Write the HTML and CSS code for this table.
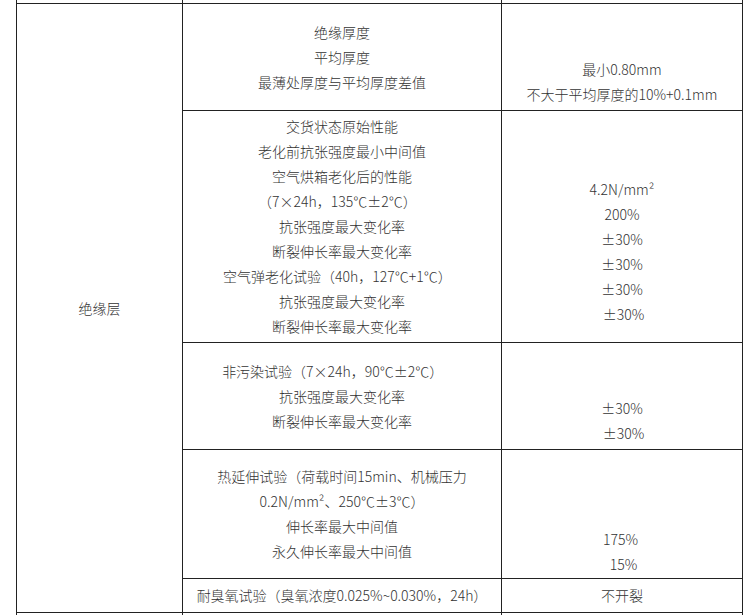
FILE: index.html
```html
<!DOCTYPE html>
<html lang="zh-CN">
<head>
<meta charset="utf-8">
<title>绝缘层性能要求</title>
<link rel="stylesheet" href="styles.css">
</head>
<body>
<div class="page">
  <div class="spec">
    <div class="cell c1 top"></div>
    <div class="cell c2 top"></div>
    <div class="cell c3 top"></div>

    <div class="cell c1 layer"><p>绝缘层</p></div>

    <div class="cell c2 r1"><p>绝缘厚度<br>平均厚度<br>最薄处厚度与平均厚度差值</p></div>
    <div class="cell c3 r1"><p><br><br>最小0.80mm<br>不大于平均厚度的10%+0.1mm</p></div>

    <div class="cell c2 r2"><p>交货状态原始性能<br>老化前抗张强度最小中间值<br>空气烘箱老化后的性能<br>（7×24h，135℃±2℃）&nbsp;&nbsp;&nbsp;<br>抗张强度最大变化率<br>断裂伸长率最大变化率<br>空气弹老化试验（40h，127℃+1℃）&nbsp;&nbsp;&nbsp;<br>抗张强度最大变化率<br>断裂伸长率最大变化率</p></div>
    <div class="cell c3 r2"><p><br><br>4.2N/mm²<br>200%<br>±30%<br>±30%<br>±30%<br>&nbsp;±30%</p></div>

    <div class="cell c2 r3"><p>非污染试验（7×24h，90℃±2℃）&nbsp;&nbsp;&nbsp;&nbsp;&nbsp;&nbsp;<br>抗张强度最大变化率<br>断裂伸长率最大变化率</p></div>
    <div class="cell c3 r3"><p><br><br>±30%<br>&nbsp;±30%</p></div>

    <div class="cell c2 r4"><p>热延伸试验（荷载时间15min、机械压力<br>0.2N/mm²、250℃±3℃）<br>伸长率最大中间值<br>永久伸长率最大中间值</p></div>
    <div class="cell c3 r4"><p><br><br><br>175%&nbsp;<br>&nbsp;15%</p></div>

    <div class="cell c2 r5"><p>耐臭氧试验（臭氧浓度0.025%~0.030%，24h）</p></div>
    <div class="cell c3 r5"><p>不开裂</p></div>

    <div class="cell c1 bottom"></div>
    <div class="cell c2 bottom"></div>
    <div class="cell c3 bottom"></div>
  </div>
</div>
</body>
</html>
```

FILE: styles.css
```css
html, body {
  margin: 0;
  padding: 0;
  background: #ffffff;
}

body {
  font-family: "Noto Sans CJK SC", "Liberation Sans", sans-serif;
  font-size: 14px;
  color: #333333;
  overflow: hidden;
}

.page {
  padding-left: 16px;
  height: 615px;
  overflow: hidden;
}

.spec {
  display: grid;
  width: 725px;
  padding: 0 1px;
  gap: 1px;
  background: #222222;
  grid-template-columns: 165px 318px 240px;
  grid-template-rows: 3px 106px 231px 106px 128px 33px 30px;
}

.cell {
  background: #ffffff;
  display: flex;
  align-items: center;
  justify-content: center;
  text-align: center;
}

.cell p {
  margin: 0;
  line-height: 25px;
  white-space: nowrap;
  font-weight: 300;
}

.c1 { grid-column: 1; }
.c2 { grid-column: 2; }
.c3 { grid-column: 3; }

.layer { grid-row: 2 / 7; }
.r1 { grid-row: 2; }
.r2 { grid-row: 3; }
.r3 { grid-row: 4; }
.r4 { grid-row: 5; }
.r5 { grid-row: 6; }
.top { grid-row: 1; }
.bottom { grid-row: 7; }
```
